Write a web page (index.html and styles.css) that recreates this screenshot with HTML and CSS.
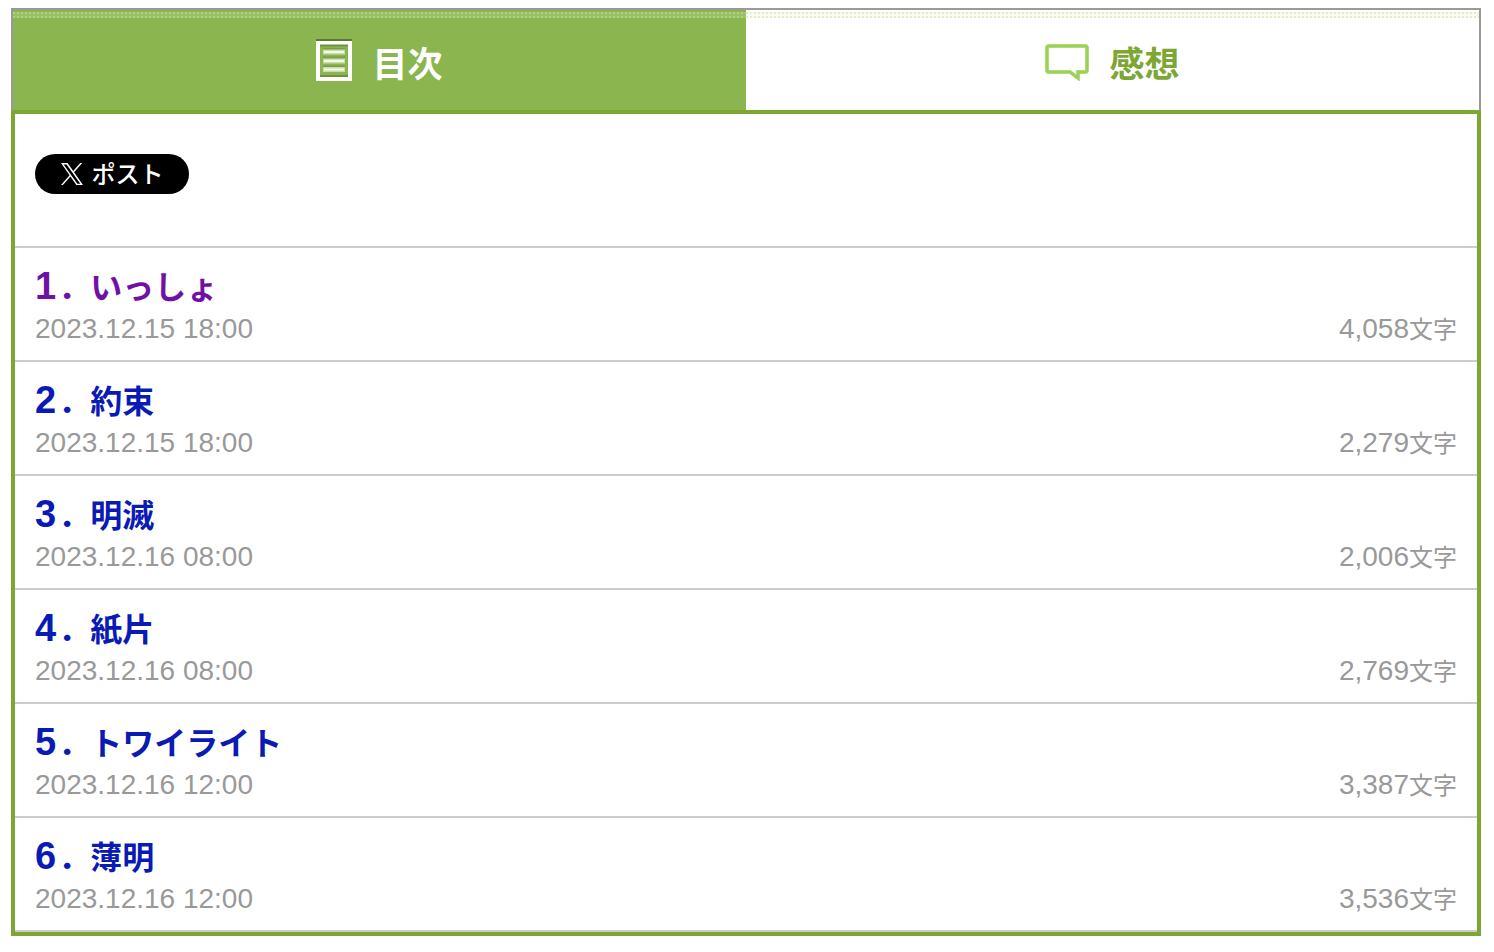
FILE: index.html
```html
<!DOCTYPE html>
<html lang="ja">
<head>
<meta charset="utf-8">
<title>目次</title>
<link rel="stylesheet" href="styles.css">
</head>
<body>
<nav class="tabs">
  <a class="tab tab-active" href="#contents">
    <svg class="icon-list" viewBox="0 0 36 42" aria-hidden="true">
      <path d="M0 1H36" stroke="#587c2b" stroke-width="2"/>
      <rect x="2" y="4" width="32" height="36" fill="none" stroke="#fff" stroke-width="4"/>
      <path d="M4 6.500H32M4 37H32" stroke="#6c9140" stroke-width="2"/>
      <path d="M7 10H29M7 18.500H29M7 27.500H29" stroke="#779e48" stroke-width="2"/>
      <path d="M7 13H29M7 22H29M7 30.500H29" stroke="#c9deab" stroke-width="5"/>
      <path d="M8 13H28M8 22H28M8 30.500H28" stroke="#f4f9ec" stroke-width="2"/>
    </svg>
    <span>目次</span>
  </a>
  <a class="tab" href="#comments">
    <svg class="icon-comment" viewBox="0 0 44 38" aria-hidden="true">
      <path d="M4 3H40Q42 3 42 5V27Q42 29 40 29H33V35L25 29H4Q2 29 2 27V5Q2 3 4 3Z" fill="none" stroke="#c5e69c" stroke-width="4"/>
      <path d="M4 3H40Q42 3 42 5V27Q42 29 40 29H33V35L25 29H4Q2 29 2 27V5Q2 3 4 3Z" fill="none" stroke="#9bd155" stroke-width="3"/>
    </svg>
    <span>感想</span>
  </a>
</nav>
<main class="panel" id="contents">
  <div class="share">
    <button class="post" type="button">
      <svg class="icon-x" viewBox="0 0 24 24" aria-hidden="true"><path fill="#fff" d="M14.260 10.160L23.180 0H21.070L13.320 8.820L7.130 0H0L9.360 13.340L0 24H2.110L10.290 14.680L16.830 24H23.960M2.880 1.560H6.130L21.070 22.510H17.820"/></svg>
      <span>ポスト</span>
    </button>
  </div>
  <ol class="chapters">
    <li class="chapter"><a class="title visited" href="#c1"><span class="num">1</span>．いっしょ</a><div class="meta"><time>2023.12.15 18:00</time><span>4,058<span class="unit">文字</span></span></div></li>
    <li class="chapter"><a class="title" href="#c2"><span class="num">2</span>．約束</a><div class="meta"><time>2023.12.15 18:00</time><span>2,279<span class="unit">文字</span></span></div></li>
    <li class="chapter"><a class="title" href="#c3"><span class="num">3</span>．明滅</a><div class="meta"><time>2023.12.16 08:00</time><span>2,006<span class="unit">文字</span></span></div></li>
    <li class="chapter"><a class="title" href="#c4"><span class="num">4</span>．紙片</a><div class="meta"><time>2023.12.16 08:00</time><span>2,769<span class="unit">文字</span></span></div></li>
    <li class="chapter"><a class="title" href="#c5"><span class="num">5</span>．トワイライト</a><div class="meta"><time>2023.12.16 12:00</time><span>3,387<span class="unit">文字</span></span></div></li>
    <li class="chapter"><a class="title" href="#c6"><span class="num">6</span>．薄明</a><div class="meta"><time>2023.12.16 12:00</time><span>3,536<span class="unit">文字</span></span></div></li>
  </ol>
</main>
</body>
</html>
```
FILE: styles.css
```css
* { box-sizing: border-box; }
body {
  margin: 8px 13px 16px 11px;
  background: #fff;
  font-family: "Liberation Sans", "Noto Sans CJK JP", sans-serif;
}
.tabs {
  display: grid;
  grid-template-columns: 1fr 1fr;
  border: 2px solid #999;
  border-bottom: 0;
}
.tab {
  display: flex;
  align-items: center;
  justify-content: center;
  gap: 20px;
  height: 100px;
  padding-top: 4px;
  color: #7da632;
  font-family: "Noto Sans CJK JP", sans-serif;
  font-size: 35px;
  font-weight: 700;
  line-height: 48px;
  text-decoration: none;
  background-image:
    repeating-linear-gradient(90deg, rgba(200, 226, 150, .5) 0 2px, transparent 2px 4px),
    repeating-linear-gradient(90deg, rgba(200, 226, 150, .5) 0 2px, transparent 2px 4px),
    linear-gradient(rgba(220, 236, 190, .2), rgba(220, 236, 190, .2));
  background-repeat: no-repeat;
  background-size: 100% 2px, 100% 2px, 100% 6px;
  background-position: 0 2px, 0 6px, 0 2px;
}
.tab-active { background-color: #8ab54f; color: #fff; }
.icon-list { width: 36px; height: 42px; margin-bottom: 4px; }
.icon-comment { width: 44px; height: 38px; }
.panel { border: 4px solid #7da632; }
.share {
  padding: 40px 20px 52px;
  border-bottom: 2px solid #ccc;
}
.post {
  display: flex;
  align-items: center;
  justify-content: center;
  gap: 9px;
  width: 154px;
  height: 40px;
  padding: 0;
  border: 0;
  border-radius: 20px;
  background: #000;
  color: #fff;
  font-family: "Noto Sans CJK JP", sans-serif;
  font-size: 24px;
  font-weight: 500;
  line-height: 36px;
}
.post span { padding-bottom: 2px; }
.icon-x { width: 22px; height: 22px; }
.chapters { margin: 0; padding: 0; list-style: none; }
.chapter {
  padding: 15px 20px 13px;
  border-bottom: 2px solid #ccc;
}
.title {
  display: block;
  margin-bottom: 4px;
  color: #0a1bb5;
  font-family: "Noto Sans CJK JP", sans-serif;
  font-size: 32px;
  font-weight: 700;
  line-height: 44px;
  text-decoration: none;
}
.visited { color: #7011a5; }
.num {
  margin-right: 2px;
  font-family: "Liberation Sans", sans-serif;
  font-size: 38px;
  line-height: 1;
}
.meta {
  display: flex;
  justify-content: space-between;
  color: #999;
  font-size: 28px;
  line-height: 36px;
}
.unit { font-size: 24px; line-height: 1; }
```
